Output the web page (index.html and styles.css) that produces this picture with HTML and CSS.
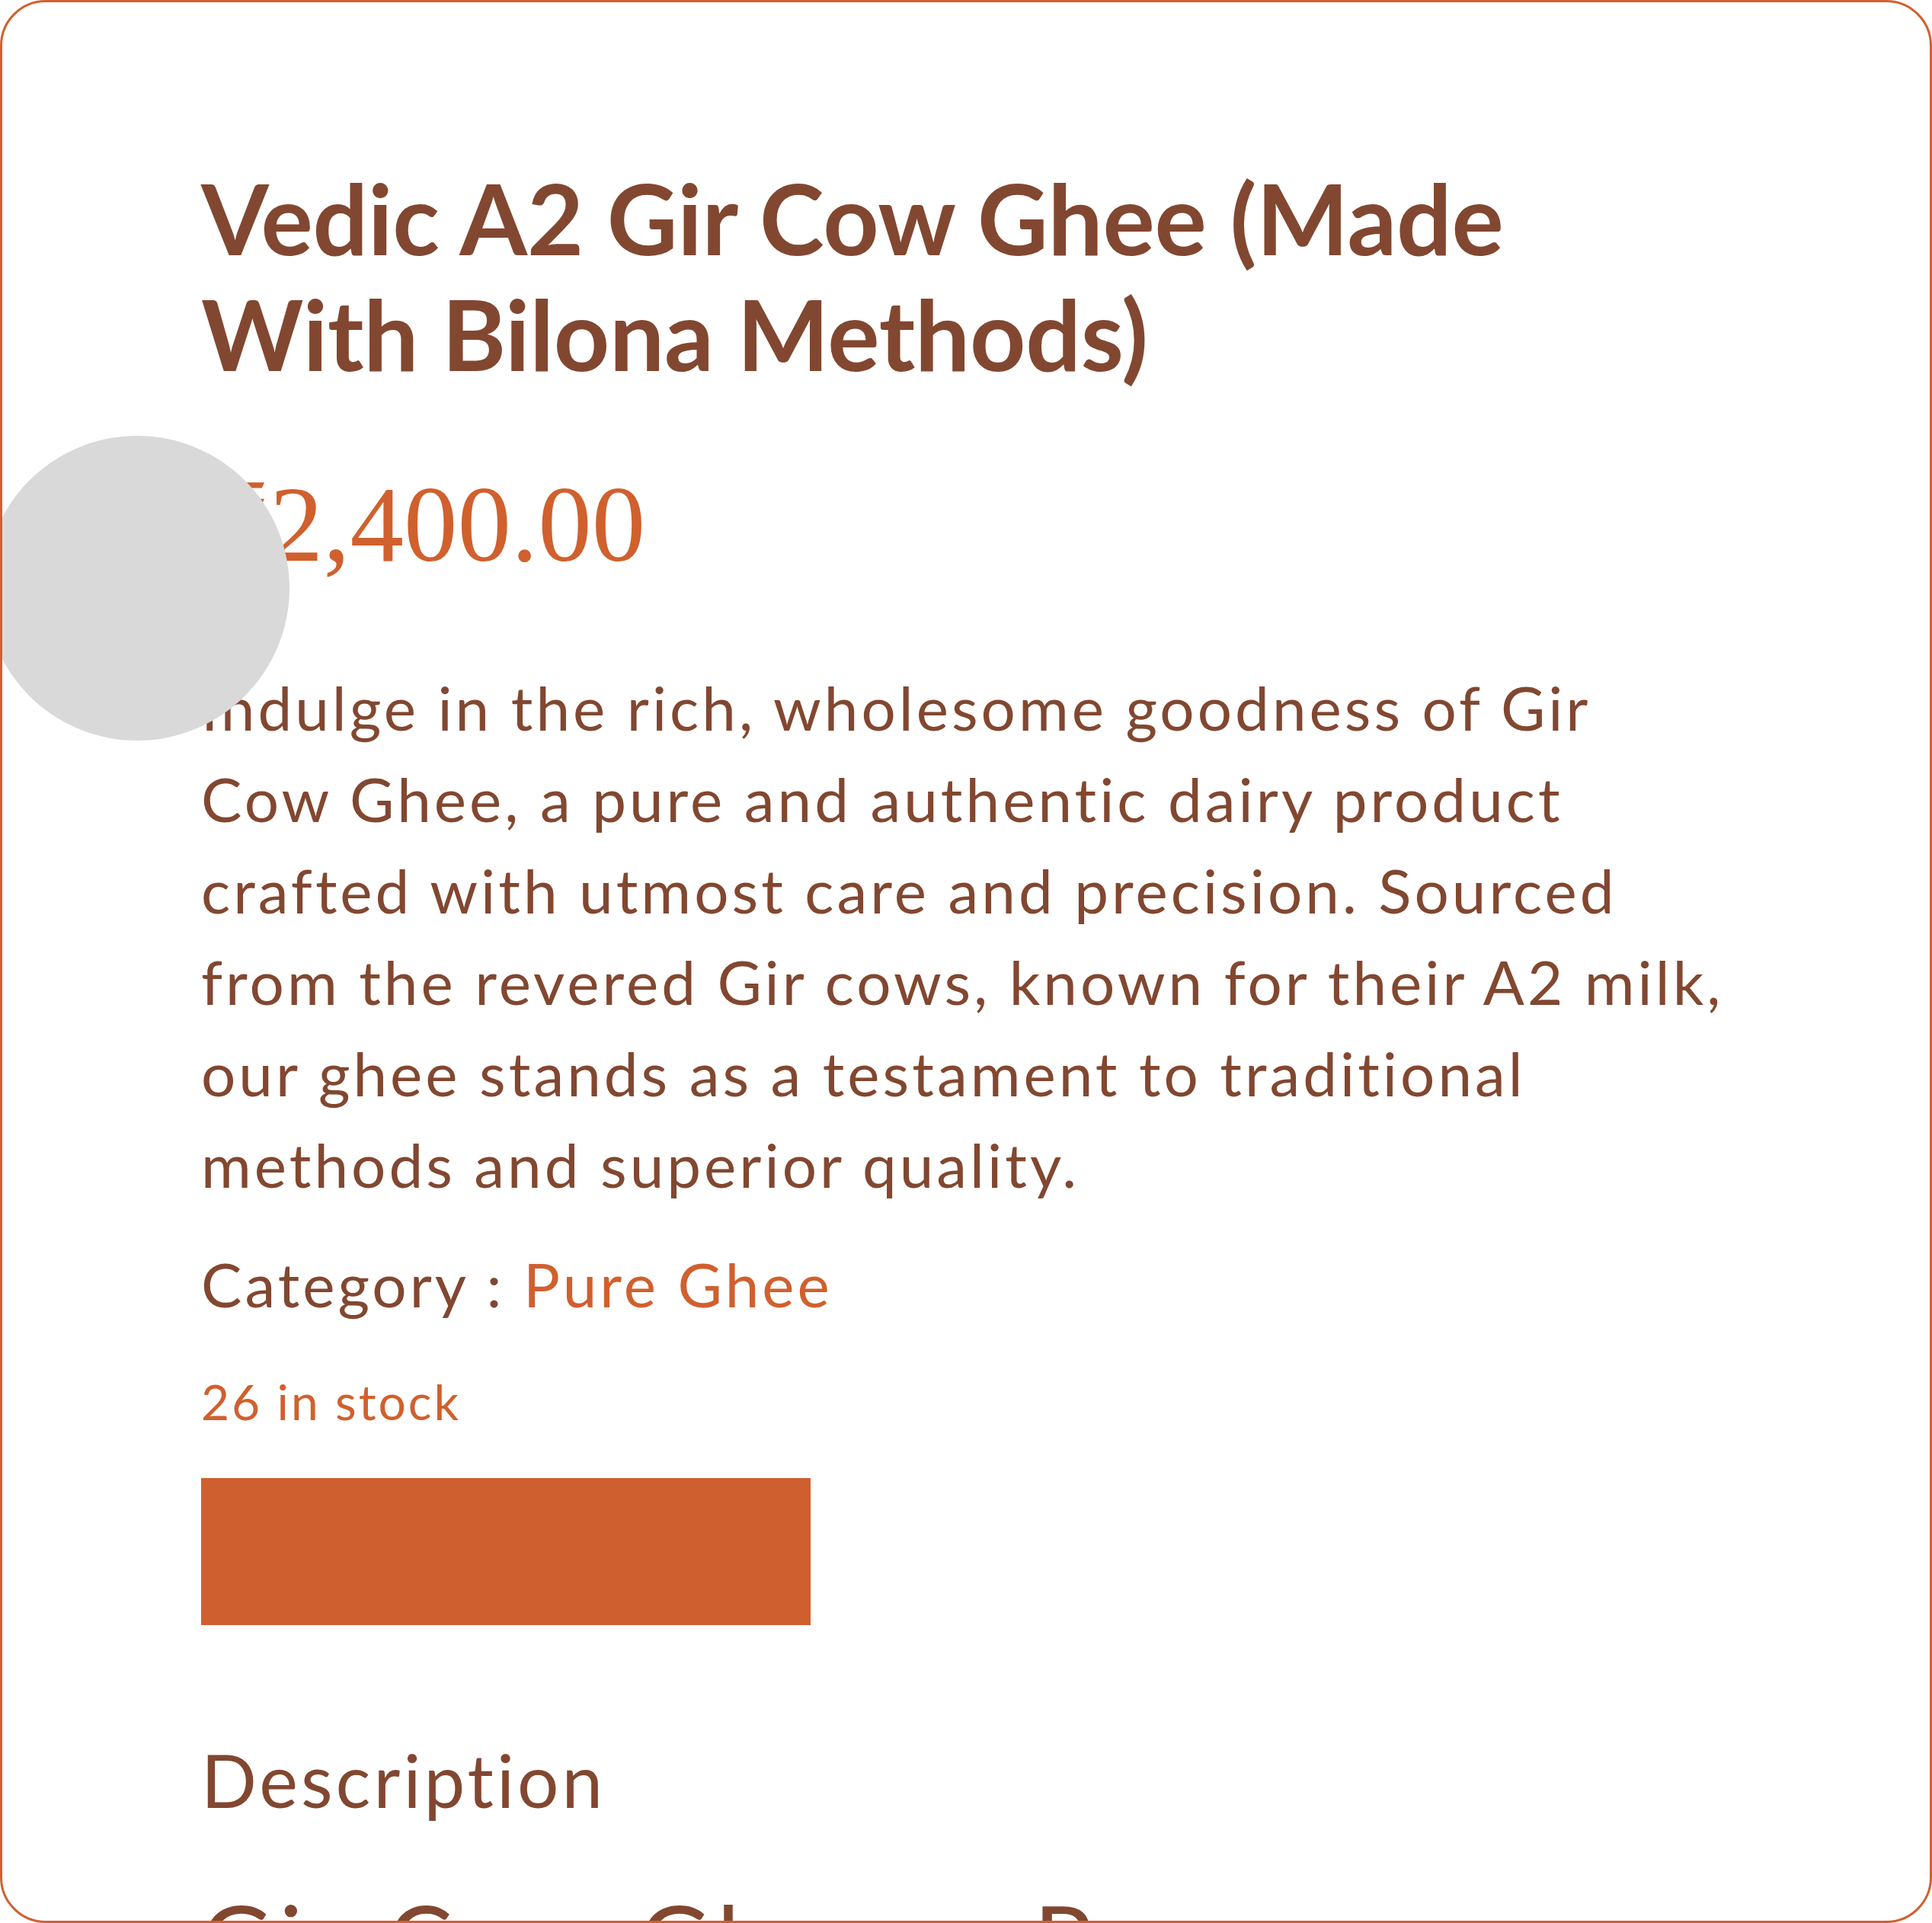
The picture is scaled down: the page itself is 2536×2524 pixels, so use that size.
FILE: index.html
```html
<!DOCTYPE html>
<html lang="en">
<head>
<meta charset="utf-8">
<title>Vedic A2 Gir Cow Ghee</title>
<link rel="stylesheet" href="styles.css">
</head>
<body>
<div class="card">
  <div class="product">
    <h1 class="title">Vedic A2 Gir Cow Ghee (Made With Bilona Methods)</h1>
    <p class="price">₹2,400.00</p>
    <p class="desc">Indulge in the rich, wholesome goodness of Gir Cow Ghee, a pure and authentic dairy product crafted with utmost care and precision. Sourced from the revered Gir cows, known for their A2 milk, our ghee stands as a testament to traditional methods and superior quality.</p>
    <p class="category">Category : <span class="cat-link">Pure Ghee</span></p>
    <p class="stock">26 in stock</p>
    <button class="add-btn" type="button" aria-label="Add to cart"></button>
    <h2 class="section-title">Description</h2>
    <h3 class="sub-title">Gir Cow Ghee – Pure Nourishment</h3>
  </div>
  <div class="cursor-dot"></div>
</div>
</body>
</html>
```

FILE: styles.css
```css
html, body {
  margin: 0;
  padding: 0;
  background: #ffffff;
}

.card {
  position: relative;
  box-sizing: border-box;
  width: 2536px;
  height: 2524px;
  border: 3px solid #d2602f;
  border-radius: 60px;
  overflow: hidden;
  background: #ffffff;
  padding: 207px 261px 0 261px;
}

.product {
  display: flex;
  flex-direction: column;
  align-items: flex-start;
  color: #824730;
  font-family: "Lato", "Liberation Sans", sans-serif;
}

.title {
  margin: 0;
  font-size: 128px;
  line-height: 152px;
  font-weight: 700;
  letter-spacing: -0.25px;
  color: #824730;
}

.price {
  margin: 104px 0 0;
  font-family: "Liberation Serif", "DejaVu Serif", serif;
  font-size: 141px;
  line-height: 140px;
  color: #d0602e;
}

.desc {
  margin: 110px 0 0;
  font-size: 80px;
  line-height: 120px;
  letter-spacing: 4px;
}

.category {
  margin: 37px 0 0;
  font-size: 80px;
  line-height: 120px;
  letter-spacing: 4px;
}

.cat-link {
  color: #d0602e;
}

.stock {
  margin: 47px 0 0;
  font-size: 64px;
  line-height: 96px;
  letter-spacing: 3px;
  color: #d0602e;
}

.add-btn {
  margin: 52px 0 0;
  width: 800px;
  height: 193px;
  border: none;
  padding: 0;
  background: #cf5f2e;
}

.section-title {
  margin: 145px 0 0;
  font-size: 96px;
  line-height: 115px;
  font-weight: 400;
  letter-spacing: 4px;
}

.sub-title {
  margin: 77px 0 0;
  font-size: 128px;
  line-height: 150px;
  font-weight: 400;
  letter-spacing: 9.5px;
  word-spacing: 6px;
}

.cursor-dot {
  position: absolute;
  left: -23px;
  top: 569px;
  width: 400px;
  height: 400px;
  border-radius: 50%;
  background: #d9d9d9;
}
```
